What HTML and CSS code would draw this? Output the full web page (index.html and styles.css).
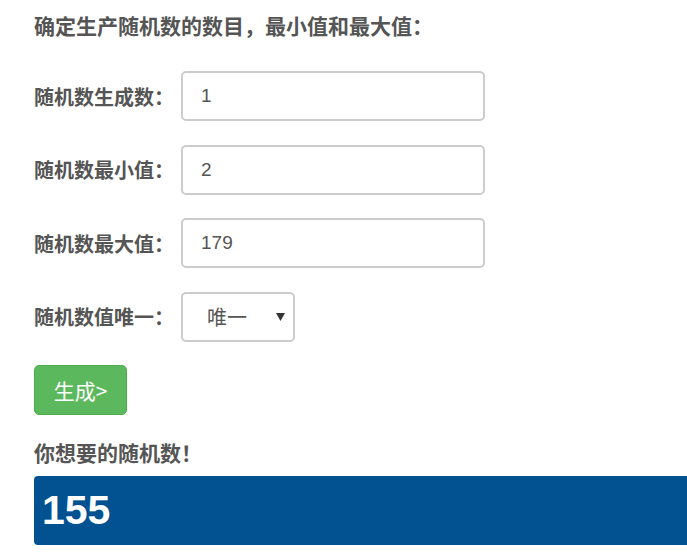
FILE: index.html
```html
<!DOCTYPE html>
<html lang="zh-CN">
<head>
    <meta charset="UTF-8">
    <meta name="viewport" content="width=device-width, initial-scale=1.0">
    <title>随机数生成</title>
    <link rel="stylesheet" href="styles.css">
</head>
<body>
    <div class="page">
        <h4 class="title">确定生产随机数的数目，最小值和最大值：</h4>

        <form class="gen-form">
            <div class="form-row">
                <label for="count">随机数生成数：</label>
                <input type="text" id="count" class="form-input" value="1">
            </div>
            <div class="form-row">
                <label for="min">随机数最小值：</label>
                <input type="text" id="min" class="form-input" value="2">
            </div>
            <div class="form-row">
                <label for="max">随机数最大值：</label>
                <input type="text" id="max" class="form-input" value="179">
            </div>
            <div class="form-row">
                <label for="unique">随机数值唯一：</label>
                <div class="select-wrap">
                    <select id="unique" class="form-select">
                        <option>唯一</option>
                        <option>不唯一</option>
                    </select>
                    <svg class="select-arrow" width="9" height="8" viewBox="0 0 9 8"><path d="M0 0 H9 L4.5 8 Z" fill="#333"/></svg>
                </div>
            </div>
            <button type="button" class="btn-gen">生成&gt;</button>
        </form>

        <h4 class="result-title">你想要的随机数！</h4>
        <div class="result-box">155</div>
    </div>
</body>
</html>
```

FILE: styles.css
```css
html, body {
    overflow: hidden;
}

body {
    margin: 0;
    font-family: "Liberation Sans", Arial, "Noto Sans CJK SC", sans-serif;
    color: #555;
    background: #fff;
}

.page {
    padding: 13px 0 0 34px;
    width: 700px;
}

.title {
    margin: 0 0 30px;
    font-size: 21px;
    line-height: 28px;
    font-weight: bold;
}

.form-row {
    display: flex;
    align-items: center;
    height: 50px;
    margin-bottom: 23.5px;
}

.form-row label {
    width: 147px;
    font-size: 20px;
    font-weight: bold;
    flex-shrink: 0;
}

.form-input {
    box-sizing: border-box;
    width: 304px;
    height: 50px;
    padding: 0 18px;
    border: 2px solid #ccc;
    border-radius: 5px;
    font-family: "Liberation Sans", Arial, sans-serif;
    font-size: 19px;
    color: #555;
    outline: none;
}

.select-wrap {
    position: relative;
}

.form-select {
    box-sizing: border-box;
    width: 114px;
    height: 50px;
    padding: 0 0 0 24px;
    border: 2px solid #ccc;
    border-radius: 5px;
    background: #fff;
    font-family: "Noto Sans CJK SC", sans-serif;
    font-size: 20px;
    color: #555;
    appearance: none;
    -webkit-appearance: none;
    outline: none;
}

.select-arrow {
    position: absolute;
    left: 95px;
    top: 21px;
}

.btn-gen {
    display: block;
    box-sizing: border-box;
    width: 93px;
    height: 50px;
    padding: 0;
    border: 1px solid #4cae4c;
    border-radius: 5px;
    background: #5cb85c;
    color: #fff;
    font-family: "Noto Sans CJK SC", sans-serif;
    font-size: 21px;
    cursor: pointer;
}

.result-title {
    margin: 26px 0 9px;
    font-size: 21px;
    line-height: 26px;
    font-weight: bold;
}

.result-box {
    box-sizing: border-box;
    height: 69px;
    padding: 0 0 0 8px;
    border-radius: 4px;
    background: #025190;
    color: #fff;
    font-family: "Liberation Sans", Arial, sans-serif;
    font-size: 41px;
    font-weight: bold;
    line-height: 69px;
}
```
